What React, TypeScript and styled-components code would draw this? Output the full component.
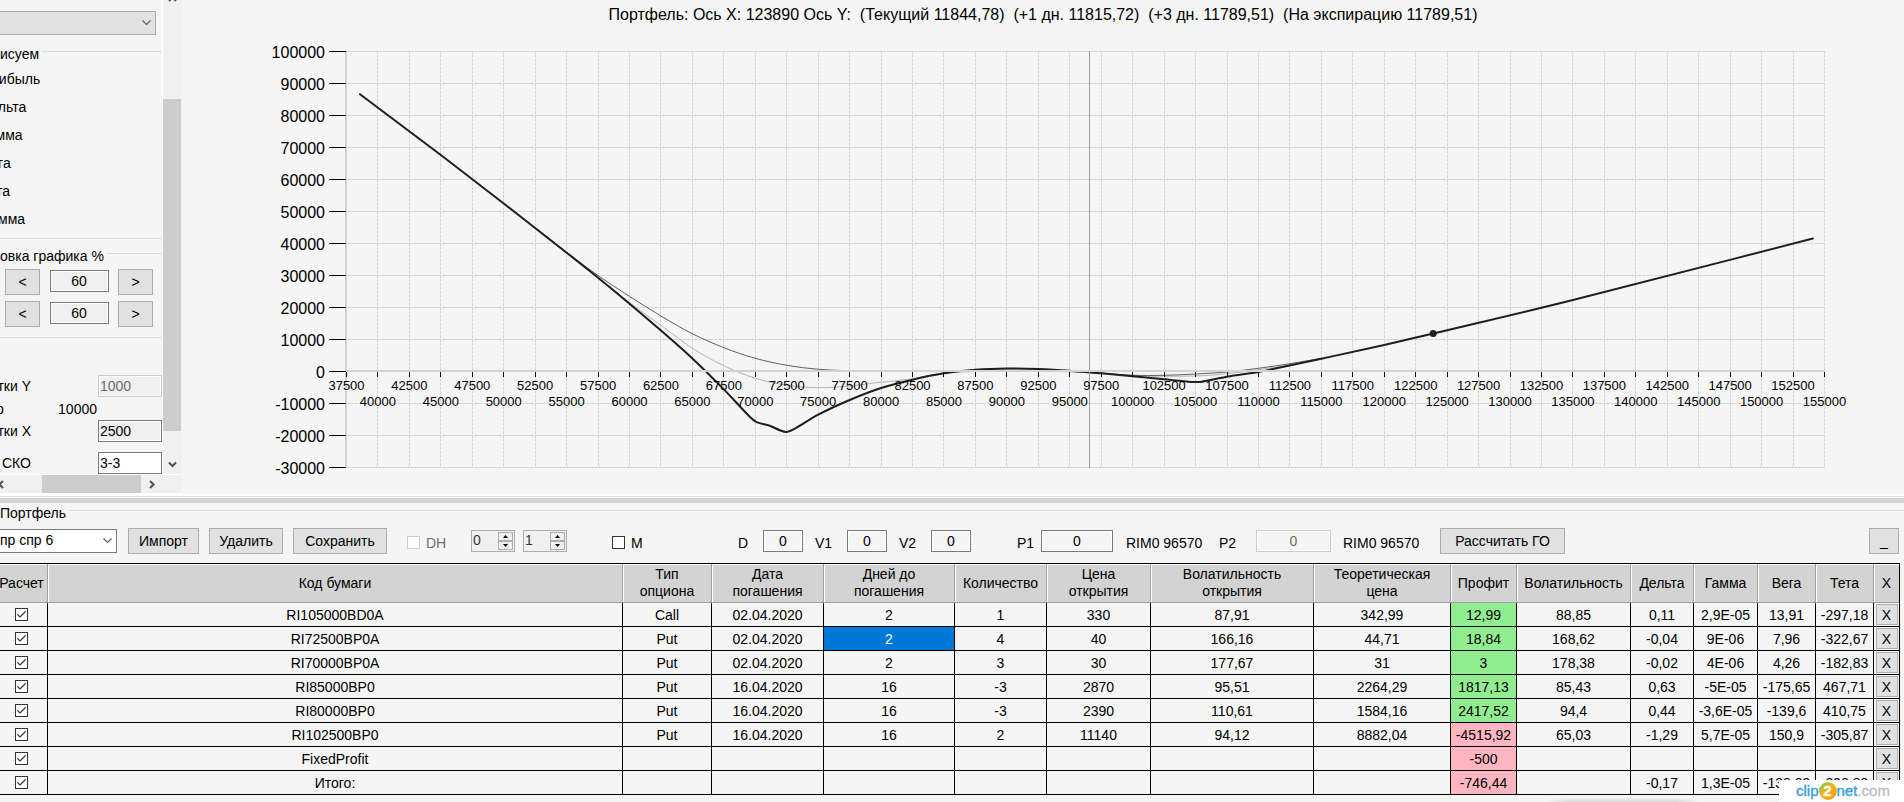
import React from "react";
import styled, { createGlobalStyle } from "styled-components";

const colors = {
  page: "#f5f5f5",
  face: "#e1e1e1",
  faceBorder: "#adadad",
  fieldBorder: "#7a7a7a",
  track: "#f0f0f0",
  thumb: "#cdcdcd",
  line: "#dcdcdc",
  header: "#d3d3d3",
  profit: "#90ee90",
  loss: "#ffb6c1",
  selected: "#0078d7",
};

const GlobalStyle = createGlobalStyle`
  *, *::before, *::after { box-sizing: border-box; }
  body { margin: 0; background: ${colors.page}; overflow-x: hidden; }
  body, input, select, button {
    font-family: "Liberation Sans", Arial, sans-serif;
    font-size: 14px;
    line-height: 16px;
    color: #000;
  }
`;

const Window = styled.div`
  position: relative;
  display: flex;
  flex-direction: column;
  min-height: 100vh;
  overflow: hidden;
  background: ${colors.page};
`;

const TopPane = styled.div`
  display: flex;
  align-items: flex-start;
  background: ${colors.page};
`;

const Splitter = styled.div`
  height: 9px;
  border-top: 2px solid #fff;
  border-bottom: 5px solid ${colors.header};
  background: linear-gradient(${colors.line} 50%, ${colors.page} 50%);
`;

/* ---------- shared controls ---------- */

const Button = styled.button<{ $w: number; $gap?: number }>`
  flex: none;
  width: ${(p) => p.$w}px;
  height: 26px;
  margin: 0 0 0 ${(p) => p.$gap ?? 0}px;
  padding: 0;
  border: 1px solid ${colors.faceBorder};
  background: ${colors.face};
  white-space: nowrap;
`;

const TextBox = styled.input<{ $w: number; $left?: boolean; $white?: boolean; $face?: boolean }>`
  flex: none;
  width: ${(p) => p.$w}px;
  height: 22px;
  margin: 0;
  padding: 0 1px;
  border: 1px solid ${colors.fieldBorder};
  border-radius: 0;
  outline: none;
  background: ${(p) => (p.$white ? "#fff" : p.$face ? colors.track : colors.page)};
  box-shadow: inset 0 0 0 1px #fff;
  text-align: ${(p) => (p.$left ? "left" : "center")};
  &:disabled { border-color: #ccc; color: #6d6d6d; }
`;

const SelectShell = styled.span<{ $w: number; $disabled?: boolean }>`
  position: relative;
  flex: none;
  display: flex;
  width: ${(p) => p.$w}px;
  height: 24px;
  margin-left: -4px;
  svg { position: absolute; right: 5px; top: 8px; pointer-events: none; }
  select {
    appearance: none;
    width: 100%;
    margin: 0;
    padding: 0 20px 2px 3px;
    border: 1px solid ${(p) => (p.$disabled ? colors.faceBorder : colors.fieldBorder)};
    border-radius: 0;
    background: ${(p) => (p.$disabled ? colors.face : "#fff")};
    opacity: 1;
  }
`;

const Chevron = () => (
  <svg width="9" height="8" viewBox="0 0 9 8" aria-hidden="true">
    <path d="M0.5 1.5 L4.5 5.5 L8.5 1.5" fill="none" stroke="#606060" strokeWidth="1.2" />
  </svg>
);

const CheckShell = styled.span`
  position: relative;
  flex: none;
  display: inline-block;
  width: 13px;
  height: 13px;
  svg { position: absolute; left: 0; top: 0; pointer-events: none; }
  input {
    appearance: none;
    display: block;
    width: 13px;
    height: 13px;
    margin: 0;
    border: 1px solid #333;
    background: #fff;
  }
  input:disabled { border-color: #ccc; }
`;

type CheckProps = { label?: string; id?: string; on?: boolean; disabled?: boolean };
const Check = ({ label, id, on, disabled }: CheckProps) => (
  <CheckShell>
    <input type="checkbox" id={id} aria-label={label} defaultChecked={on} disabled={disabled} />
    {on && (
      <svg width="13" height="13" viewBox="0 0 13 13" aria-hidden="true">
        <path d="M2.5 6.5 L5 9 L10.5 3.5" fill="none" stroke="#333" strokeWidth="1.2" />
      </svg>
    )}
  </CheckShell>
);

/* ---------- side panel ---------- */

const Side = styled.aside`
  flex: none;
  display: grid;
  grid-template-columns: 162px 20px;
  overflow: hidden;
`;

const SideBody = styled.div`
  display: flex;
  flex-direction: column;
  padding-top: 11px;
  overflow: hidden;
`;

const Legend = styled.h2<{ $top: number }>`
  display: flex;
  align-items: center;
  gap: 3px;
  height: 16px;
  margin: ${(p) => p.$top}px 0 0;
  font-size: 14px;
  font-weight: 400;
  white-space: nowrap;
  &::after {
    content: "";
    flex: 1;
    height: 1px;
    margin-bottom: 6px;
    background: ${colors.line};
  }
`;

const GreekList = styled.ul`
  list-style: none;
  margin: 0 0 0 -19px;
  padding: 3px 0 5px;
  border-bottom: 1px solid ${colors.line};
  li { line-height: 28px; }
`;

const ScaleRows = styled.div`
  display: flex;
  flex-direction: column;
  gap: 6px;
  padding: 5px 9px 10px 5px;
  border-bottom: 1px solid ${colors.line};
`;

const ScaleRow = styled.div`
  display: flex;
  justify-content: space-between;
  align-items: flex-start;
  input { margin-top: 1px; }
`;

const SettingRow = styled.div<{ $top: number; $h: number }>`
  display: grid;
  grid-template-columns: 31px 66px 65px;
  align-items: center;
  justify-items: end;
  height: ${(p) => p.$h}px;
  margin-top: ${(p) => p.$top}px;
  white-space: nowrap;
  input { grid-column: 3; }
`;

const StartLabel = styled.span`
  justify-self: start;
  margin-left: -4px;
`;

const VBar = styled.div`
  display: flex;
  flex-direction: column;
  align-items: center;
  justify-content: space-between;
  border-left: 1px solid #fff;
  background: linear-gradient(${colors.thumb}, ${colors.thumb}) 0 99px / 18px 332px no-repeat ${colors.track};
  svg:last-child { margin-bottom: 5px; }
`;

const HBar = styled.div`
  grid-column: 1 / -1;
  height: 20px;
  display: flex;
  align-items: center;
  padding-right: 26px;
  border-top: 1px solid #fff;
  border-bottom: 1px solid #fff;
  background: ${colors.track};
`;

const HThumb = styled.div`
  width: 99px;
  height: 18px;
  margin: 0 auto 0 33px;
  background: ${colors.thumb};
`;

const Arrow = ({ d }: { d: string }) => (
  <svg width="9" height="9" viewBox="0 0 9 9" aria-hidden="true">
    <path d={d} fill="none" stroke="#505050" strokeWidth="2" />
  </svg>
);

const greeks = ["Прибыль", "Дельта", "Гамма", "Вега", "Тета", "Вомма"];

const SidePanel = () => (
  <Side>
    <SideBody>
      <SelectShell $w={160} $disabled>
        <select disabled aria-label="Параметр" />
        <Chevron />
      </SelectShell>
      <Legend $top={11}>исуем</Legend>
      <GreekList>
        {greeks.map((g) => (
          <li key={g}>{g}</li>
        ))}
      </GreekList>
      <Legend $top={9}>овка графика %</Legend>
      <ScaleRows>
        {["X", "Y"].map((axis) => (
          <ScaleRow key={axis}>
            <Button $w={35}>&lt;</Button>
            <TextBox $w={59} $face defaultValue="60" aria-label={axis} />
            <Button $w={35}>&gt;</Button>
          </ScaleRow>
        ))}
      </ScaleRows>
      <SettingRow $top={37} $h={22}>
        <label htmlFor="stepY">тки Y</label>
        <TextBox id="stepY" $w={64} $left $face disabled defaultValue="1000" />
      </SettingRow>
      <SettingRow $top={0} $h={23}>
        <StartLabel>р</StartLabel>
        <span>10000</span>
      </SettingRow>
      <SettingRow $top={0} $h={22}>
        <label htmlFor="stepX">тки X</label>
        <TextBox id="stepX" $w={64} $left $face defaultValue="2500" />
      </SettingRow>
      <SettingRow $top={10} $h={22}>
        <label htmlFor="sko">СКО</label>
        <TextBox id="sko" $w={64} $left $white defaultValue="3-3" />
      </SettingRow>
    </SideBody>
    <VBar>
      <Arrow d="M1 1 L4.5 -2.5 L8 1" />
      <Arrow d="M1 2.5 L4.5 6 L8 2.5" />
    </VBar>
    <HBar>
      <Arrow d="M3 1 L-0.5 4.5 L3 8" />
      <HThumb />
      <Arrow d="M3 1 L6.5 4.5 L3 8" />
    </HBar>
  </Side>
);

/* ---------- chart ---------- */

type Point = [number, number];

const expiration: Point[] = [
  [38573, 86650], [45000, 67650], [50000, 52500], [55000, 37125], [57500, 29300], [60000, 21200],
  [62500, 12800], [65000, 4060], [67500, -5600], [69600, -14300], [70100, -15800], [71150, -16940],
  [72000, -18440], [72450, -18900], [73000, -18200], [75000, -13500], [77500, -8900], [80000, -5150],
  [82500, -2560], [85000, -560], [87500, 560], [90000, 940], [92500, 780], [95000, 250],
  [97500, -560], [100000, -1500], [102500, -2440], [104700, -3250], [105400, -3250], [107500, -1625],
  [110000, -150], [111150, 780], [115000, 4000], [120000, 8280], [123890, 11845], [135000, 22340],
  [154074, 41560],
];

const current: Point[] = [
  [52500, 45000], [55000, 37300], [57500, 29950], [60000, 23500], [62500, 17340], [65000, 11800],
  [67500, 7440], [70000, 4125], [72500, 1940], [75000, 690], [77500, 250], [80000, 150],
  [85000, 200], [90000, 400], [95000, 0], [97500, -500], [100000, -1190], [102500, -1190],
  [105000, -780], [107500, -160], [110000, 1000], [112500, 2440], [115000, 4130],
];

const plusThree: Point[] = [
  [57500, 29300], [60000, 21500], [62500, 14440], [65000, 7250], [67500, 1810], [70000, -2125],
  [72500, -4310], [75000, -5060], [77500, -4530], [79400, -3600], [82500, -2300], [85000, -470],
  [90000, 100], [95000, -100], [97500, -600], [100000, -1350], [105000, -1400], [107500, -690],
  [110000, 560], [112500, 2030], [115000, 3950],
];

const LEFT = 164.5;
const RIGHT = 1642.5;
const ZERO = 341.5;
const px = (price: number) => LEFT + ((price - 37500) / 117500) * (RIGHT - LEFT);
const py = (profit: number) => ZERO - (profit / 10000) * 32;
const snap = (v: number) => Math.floor(v) + 0.5;

/* Smooth curve through the points (Catmull-Rom converted to cubic segments). */
const curve = (points: Point[]) => {
  const p = points.map(([x, y]) => [px(x), py(y)]);
  let d = `M${p[0][0]} ${p[0][1]}`;
  for (let i = 0; i < p.length - 1; i++) {
    const a = p[Math.max(i - 1, 0)];
    const b = p[i];
    const c = p[i + 1];
    const e = p[Math.min(i + 2, p.length - 1)];
    const dx = c[0] - b[0];
    const m1 = (c[1] - a[1]) / (c[0] - a[0]);
    const m2 = (e[1] - b[1]) / (e[0] - b[0]);
    d += ` C${b[0] + dx / 3} ${b[1] + (m1 * dx) / 3} ${c[0] - dx / 3} ${c[1] - (m2 * dx) / 3} ${c[0]} ${c[1]}`;
  }
  return d;
};

const ChartPane = styled.main`
  flex: 1;
  min-width: 0;
`;

const ChartTitle = styled.h1`
  margin: 0;
  padding: 5px 0;
  font-size: 16px;
  font-weight: 400;
  line-height: 20px;
  text-align: center;
  white-space: pre;
`;

const Plot = styled.svg`
  display: block;
  width: 100%;
  height: auto;
  .grid { stroke: #d3d3d3; stroke-dasharray: 3 1; }
  .tick { stroke: #000; }
  .yLabel { font-size: 16px; text-anchor: end; }
  .xLabel { font-size: 13px; text-anchor: middle; }
  path { fill: none; }
`;

const yValues = Array.from({ length: 14 }, (_, i) => 100000 - i * 10000);
const xValues = Array.from({ length: 48 }, (_, i) => 37500 + i * 2500);

const Chart = () => (
  <ChartPane>
    <ChartTitle>
      {"Портфель: Ось X: 123890 Ось Y:  (Текущий 11844,78)  (+1 дн. 11815,72)  (+3 дн. 11789,51)  (На экспирацию 11789,51)"}
    </ChartTitle>
    <Plot viewBox="0 0 1722 464" role="img" aria-label="Портфель">
      {yValues.map((v) => (
        <line key={v} className="grid" x1={LEFT} x2={RIGHT} y1={py(v)} y2={py(v)} />
      ))}
      {xValues.slice(1).map((v) => (
        <line key={v} className="grid" x1={snap(px(v))} x2={snap(px(v))} y1={21} y2={438} />
      ))}
      <path d={curve(plusThree)} stroke="#b4b4b4" />
      <path d={curve(current)} stroke="#606060" />
      <path d={curve(expiration)} stroke="#1e1e1e" strokeWidth="2" strokeLinecap="round" />
      <circle cx={px(123890)} cy={py(11845)} r="3.5" fill="#1e1e1e" />
      <line x1="907.5" x2="907.5" y1="21" y2="438" stroke="#989ca6" />
      <rect x="163" y="21" width="2" height="417" fill="#d3d3d3" />
      <rect x="163" y="340" width="1480" height="2" fill="#d3d3d3" />
      {yValues.map((v) => (
        <g key={v}>
          <line className="tick" x1="147" x2="164" y1={py(v)} y2={py(v)} />
          <text className="yLabel" x="143" y={py(v) + 6}>{v}</text>
        </g>
      ))}
      {xValues.map((v, i) => (
        <g key={v}>
          <line className="tick" x1={snap(px(v))} x2={snap(px(v))} y1="342" y2="347" />
          <text className="xLabel" x={px(v)} y={i % 2 ? 376 : 360}>{v}</text>
        </g>
      ))}
    </Plot>
  </ChartPane>
);

/* ---------- portfolio toolbar ---------- */

const Toolbar = styled.div`
  display: flex;
  align-items: center;
  height: 28px;
  margin: 6px 0 8px;
  padding-right: 5px;
`;

const Group = styled.div<{ $gap: number }>`
  flex: none;
  display: flex;
  align-items: center;
  margin-left: ${(p) => p.$gap}px;
`;

const Caption = styled.label<{ $w: number; $muted?: boolean }>`
  width: ${(p) => p.$w}px;
  padding-top: 4px;
  white-space: nowrap;
  color: ${(p) => (p.$muted ? "#6d6d6d" : "#000")};
`;

const CheckGroup = styled(Group)`
  gap: 6px;
  padding-top: 2px;
  label { padding-top: 2px; }
`;

const Quote = styled.span<{ $gap: number }>`
  flex: none;
  width: 77px;
  margin-left: ${(p) => p.$gap}px;
  padding-top: 4px;
  white-space: nowrap;
`;

const PushEnd = styled.div`
  margin-left: auto;
`;

const SpinShell = styled.div`
  display: grid;
  grid-template-columns: 1fr 15px;
  grid-template-rows: 1fr 1fr;
  width: 44px;
  height: 22px;
  padding: 1px;
  border: 1px solid ${colors.faceBorder};
  background: ${colors.track};
  input {
    grid-row: 1 / 3;
    width: 100%;
    min-width: 0;
    padding: 0 0 2px;
    border: 0;
    background: transparent;
    color: #333;
  }
  button {
    display: grid;
    place-items: center;
    padding: 0;
    border: 1px solid ${colors.faceBorder};
    background: ${colors.track};
  }
`;

const Spin = ({ label, value }: { label: string; value: string }) => (
  <SpinShell>
    <input aria-label={label} defaultValue={value} />
    <button aria-label="+">
      <svg width="5" height="3" viewBox="0 0 5 3"><path d="M0 3 L2.5 0 L5 3 Z" /></svg>
    </button>
    <button aria-label="-">
      <svg width="5" height="3" viewBox="0 0 5 3"><path d="M0 0 L2.5 3 L5 0 Z" /></svg>
    </button>
  </SpinShell>
);

type FieldProps = { id: string; gap: number; label: number; w: number; disabled?: boolean };
const Field = ({ id, gap, label, w, disabled }: FieldProps) => (
  <Group $gap={gap}>
    <Caption htmlFor={id} $w={label}>{id}</Caption>
    <TextBox id={id} $w={w} disabled={disabled} defaultValue="0" />
  </Group>
);

const PortfolioToolbar = () => (
  <Toolbar>
    <SelectShell $w={121}>
      <select aria-label="Портфель">
        <option>пр спр 6</option>
      </select>
      <Chevron />
    </SelectShell>
    <Button $w={71} $gap={11}>Импорт</Button>
    <Button $w={74} $gap={10}>Удалить</Button>
    <Button $w={94} $gap={10}>Сохранить</Button>
    <CheckGroup $gap={20}>
      <Check id="DH" disabled />
      <Caption htmlFor="DH" $w={20} $muted>DH</Caption>
    </CheckGroup>
    <Group $gap={25}><Spin label="DH 1" value="0" /></Group>
    <Group $gap={8}><Spin label="DH 2" value="1" /></Group>
    <CheckGroup $gap={45}>
      <Check id="M" />
      <Caption htmlFor="M" $w={12}>M</Caption>
    </CheckGroup>
    <Field id="D" gap={95} label={25} w={40} />
    <Field id="V1" gap={12} label={32} w={40} />
    <Field id="V2" gap={12} label={32} w={40} />
    <Field id="P1" gap={46} label={24} w={72} />
    <Quote $gap={13}>RIM0 96570</Quote>
    <Field id="P2" gap={16} label={37} w={75} disabled />
    <Quote $gap={12}>RIM0 96570</Quote>
    <Button $w={125} $gap={20}>Рассчитать ГО</Button>
    <PushEnd><Button $w={30}>_</Button></PushEnd>
  </Toolbar>
);

/* ---------- positions table ---------- */

const TableWrap = styled.div`
  margin: 0 4px 0 -4px;
`;

const Table = styled.table`
  width: 100%;
  table-layout: fixed;
  border-collapse: separate;
  border-spacing: 0;
  border-top: 1px solid #000;
  border-right: 1px solid #000;
`;

const Th = styled.th`
  height: 39px;
  padding: 0;
  border-right: 1px solid #a0a0a0;
  border-bottom: 1px solid #a0a0a0;
  background: ${colors.header};
  box-shadow: inset 1px 1px 0 #fff;
  font-weight: 400;
  line-height: 17px;
  white-space: pre;
  &:last-child { border-right: 0; }
`;

const Td = styled.td<{ $bg?: string; $fg?: string }>`
  height: 24px;
  padding: 0;
  border-right: 1px solid #000;
  border-bottom: 1px solid #000;
  background: ${(p) => p.$bg ?? "transparent"};
  color: ${(p) => p.$fg ?? "#000"};
  text-align: center;
  white-space: nowrap;
  &:last-child { border-right: 0; }
`;

const CheckCell = styled(Td)`
  line-height: 0;
`;

const RemoveButton = styled.button`
  display: block;
  width: 22px;
  height: 21px;
  margin: 0 auto;
  padding: 0;
  border: 1px solid ${colors.faceBorder};
  background: ${colors.face};
`;

const columns: [string, number | undefined][] = [
  ["Расчет", 52], ["Код бумаги", undefined], ["Тип\nопциона", 89], ["Дата\nпогашения", 112],
  ["Дней до\nпогашения", 131], ["Количество", 92], ["Цена\nоткрытия", 104],
  ["Волатильность\nоткрытия", 163], ["Теоретическая\nцена", 137], ["Профит", 66],
  ["Волатильность", 114], ["Дельта", 63], ["Гамма", 64], ["Вега", 58], ["Тета", 58], ["X", 25],
];

const rows: string[][] = [
  ["RI105000BD0A", "Call", "02.04.2020", "2", "1", "330", "87,91", "342,99", "12,99", "88,85", "0,11", "2,9E-05", "13,91", "-297,18"],
  ["RI72500BP0A", "Put", "02.04.2020", "2", "4", "40", "166,16", "44,71", "18,84", "168,62", "-0,04", "9E-06", "7,96", "-322,67"],
  ["RI70000BP0A", "Put", "02.04.2020", "2", "3", "30", "177,67", "31", "3", "178,38", "-0,02", "4E-06", "4,26", "-182,83"],
  ["RI85000BP0", "Put", "16.04.2020", "16", "-3", "2870", "95,51", "2264,29", "1817,13", "85,43", "0,63", "-5E-05", "-175,65", "467,71"],
  ["RI80000BP0", "Put", "16.04.2020", "16", "-3", "2390", "110,61", "1584,16", "2417,52", "94,4", "0,44", "-3,6E-05", "-139,6", "410,75"],
  ["RI102500BP0", "Put", "16.04.2020", "16", "2", "11140", "94,12", "8882,04", "-4515,92", "65,03", "-1,29", "5,7E-05", "150,9", "-305,87"],
  ["FixedProfit", "", "", "", "", "", "", "", "-500", "", "", "", "", ""],
  ["Итого:", "", "", "", "", "", "", "", "-746,44", "", "-0,17", "1,3E-05", "-138,09", "-296,89"],
];

const PROFIT = 8;
const DAYS = 3;

const cellColors = (row: number, col: number, text: string) => {
  if (col === PROFIT) return { $bg: text.startsWith("-") ? colors.loss : colors.profit };
  if (row === 1 && col === DAYS) return { $bg: colors.selected, $fg: "#fff" };
  return {};
};

const PositionsTable = () => (
  <TableWrap>
    <Table>
      <colgroup>
        {columns.map(([name, w], i) => (
          <col key={name + i} width={w} />
        ))}
      </colgroup>
      <thead>
        <tr>
          {columns.map(([name], i) => (
            <Th key={name + i}>{name}</Th>
          ))}
        </tr>
      </thead>
      <tbody>
        {rows.map((row, r) => (
          <tr key={row[0]}>
            <CheckCell><Check on label={row[0]} /></CheckCell>
            {row.map((text, c) => (
              <Td key={c} {...cellColors(r, c, text)}>{text}</Td>
            ))}
            <Td><RemoveButton>X</RemoveButton></Td>
          </tr>
        ))}
      </tbody>
    </Table>
  </TableWrap>
);

/* ---------- overlays ---------- */

const Shade = styled.div`
  position: absolute;
  right: 204px;
  bottom: 0;
  width: 155px;
  height: 4px;
  background: linear-gradient(transparent, #d4d4d4);
  mask-image: linear-gradient(90deg, transparent, #000 15%, #000 85%, transparent);
`;

const Watermark = styled.div`
  position: absolute;
  right: 0;
  bottom: 0;
  display: flex;
  align-items: center;
  width: 125px;
  height: 22px;
  padding: 0 0 0 17px;
  background: #fff;
  color: #3a9fe0;
  font-size: 15px;
  -webkit-text-stroke: 0.4px currentColor;
`;

const Two = styled.span`
  width: 18px;
  height: 18px;
  border-radius: 50%;
  background: linear-gradient(135deg, #8cc63f 10%, #f6b21b 45%, #f39a1e);
  color: #fff;
  font-weight: 700;
  line-height: 18px;
  text-align: center;
`;

const Com = styled.span`
  color: #bdbdc6;
`;

export default function App() {
  return (
    <Window>
      <GlobalStyle />
      <TopPane>
        <SidePanel />
        <Chart />
      </TopPane>
      <Splitter />
      <Legend $top={2}>Портфель</Legend>
      <PortfolioToolbar />
      <PositionsTable />
      <Shade />
      <Watermark>clip<Two>2</Two>net<Com>.com</Com></Watermark>
    </Window>
  );
}
